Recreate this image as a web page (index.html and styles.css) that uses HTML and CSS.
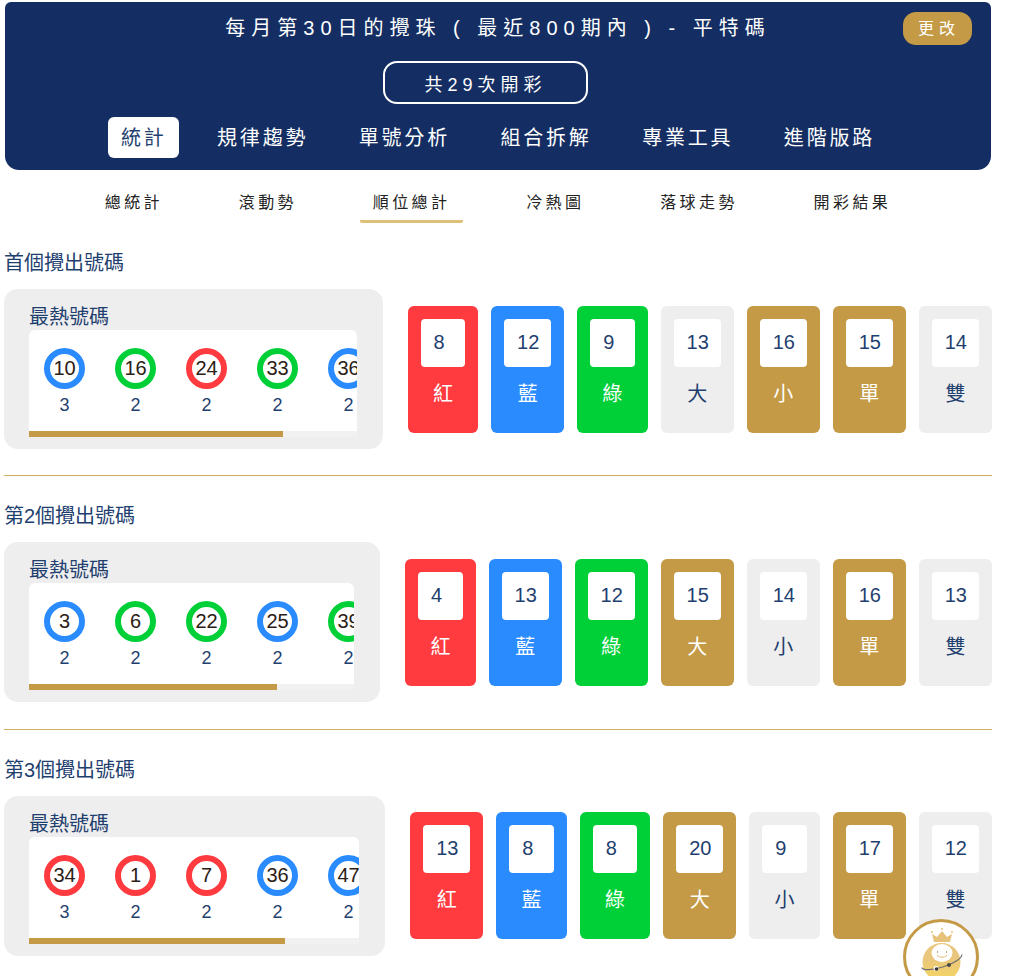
FILE: index.html
```html
<!DOCTYPE html>
<html lang="zh-Hant">
<head>
  <meta charset="UTF-8">
  <title>每月第30日的攪珠 - 平特碼</title>
  <link rel="stylesheet" href="styles.css">
</head>
<body>
  <div class="page">
    <div class="top-panel">
      <div class="title-row">
        <div class="title">每月第30日的攪珠 ( 最近800期內 ) - 平特碼</div>
        <button class="change-btn">更改</button>
      </div>
      <div class="draw-count">共29次開彩</div>
      <div class="main-nav">
        <a class="main-nav-item active">統計</a>
        <a class="main-nav-item">規律趨勢</a>
        <a class="main-nav-item">單號分析</a>
        <a class="main-nav-item">組合拆解</a>
        <a class="main-nav-item">專業工具</a>
        <a class="main-nav-item">進階版路</a>
      </div>
    </div>

    <div class="sub-nav">
      <a class="sub-nav-item">總統計</a>
      <a class="sub-nav-item">滾動勢</a>
      <a class="sub-nav-item active">順位總計</a>
      <a class="sub-nav-item">冷熱圖</a>
      <a class="sub-nav-item">落球走勢</a>
      <a class="sub-nav-item">開彩結果</a>
    </div>

    <div class="section">
      <h3 class="section-title">首個攪出號碼</h3>
      <div class="section-row">
        <div class="hot-box">
          <div class="hot-title">最熱號碼</div>
          <div class="hot-card">
            <div class="ball-list">
              <div class="ball-item"><div class="ball blue">10</div><div class="ball-count">3</div></div>
              <div class="ball-item"><div class="ball green">16</div><div class="ball-count">2</div></div>
              <div class="ball-item"><div class="ball red">24</div><div class="ball-count">2</div></div>
              <div class="ball-item"><div class="ball green">33</div><div class="ball-count">2</div></div>
              <div class="ball-item"><div class="ball blue">36</div><div class="ball-count">2</div></div>
            </div>
            <div class="scroll-track"><div class="scroll-thumb" style="width: 77.4%"></div></div>
          </div>
        </div>
        <div class="tile-list">
          <div class="tile bg-red"><div class="tile-num">8</div><div class="tile-label">紅</div></div>
          <div class="tile bg-blue"><div class="tile-num">12</div><div class="tile-label">藍</div></div>
          <div class="tile bg-green"><div class="tile-num">9</div><div class="tile-label">綠</div></div>
          <div class="tile bg-grey"><div class="tile-num">13</div><div class="tile-label">大</div></div>
          <div class="tile bg-gold"><div class="tile-num">16</div><div class="tile-label">小</div></div>
          <div class="tile bg-gold"><div class="tile-num">15</div><div class="tile-label">單</div></div>
          <div class="tile bg-grey"><div class="tile-num">14</div><div class="tile-label">雙</div></div>
        </div>
      </div>
    </div>

    <div class="section">
      <h3 class="section-title">第2個攪出號碼</h3>
      <div class="section-row">
        <div class="hot-box">
          <div class="hot-title">最熱號碼</div>
          <div class="hot-card">
            <div class="ball-list">
              <div class="ball-item"><div class="ball blue">3</div><div class="ball-count">2</div></div>
              <div class="ball-item"><div class="ball green">6</div><div class="ball-count">2</div></div>
              <div class="ball-item"><div class="ball green">22</div><div class="ball-count">2</div></div>
              <div class="ball-item"><div class="ball blue">25</div><div class="ball-count">2</div></div>
              <div class="ball-item"><div class="ball green">39</div><div class="ball-count">2</div></div>
            </div>
            <div class="scroll-track"><div class="scroll-thumb" style="width: 76.4%"></div></div>
          </div>
        </div>
        <div class="tile-list">
          <div class="tile bg-red"><div class="tile-num">4</div><div class="tile-label">紅</div></div>
          <div class="tile bg-blue"><div class="tile-num">13</div><div class="tile-label">藍</div></div>
          <div class="tile bg-green"><div class="tile-num">12</div><div class="tile-label">綠</div></div>
          <div class="tile bg-gold"><div class="tile-num">15</div><div class="tile-label">大</div></div>
          <div class="tile bg-grey"><div class="tile-num">14</div><div class="tile-label">小</div></div>
          <div class="tile bg-gold"><div class="tile-num">16</div><div class="tile-label">單</div></div>
          <div class="tile bg-grey"><div class="tile-num">13</div><div class="tile-label">雙</div></div>
        </div>
      </div>
    </div>

    <div class="section">
      <h3 class="section-title">第3個攪出號碼</h3>
      <div class="section-row">
        <div class="hot-box">
          <div class="hot-title">最熱號碼</div>
          <div class="hot-card">
            <div class="ball-list">
              <div class="ball-item"><div class="ball red">34</div><div class="ball-count">3</div></div>
              <div class="ball-item"><div class="ball red">1</div><div class="ball-count">2</div></div>
              <div class="ball-item"><div class="ball red">7</div><div class="ball-count">2</div></div>
              <div class="ball-item"><div class="ball blue">36</div><div class="ball-count">2</div></div>
              <div class="ball-item"><div class="ball blue">47</div><div class="ball-count">2</div></div>
            </div>
            <div class="scroll-track"><div class="scroll-thumb" style="width: 77.6%"></div></div>
          </div>
        </div>
        <div class="tile-list">
          <div class="tile bg-red"><div class="tile-num">13</div><div class="tile-label">紅</div></div>
          <div class="tile bg-blue"><div class="tile-num">8</div><div class="tile-label">藍</div></div>
          <div class="tile bg-green"><div class="tile-num">8</div><div class="tile-label">綠</div></div>
          <div class="tile bg-gold"><div class="tile-num">20</div><div class="tile-label">大</div></div>
          <div class="tile bg-grey"><div class="tile-num">9</div><div class="tile-label">小</div></div>
          <div class="tile bg-gold"><div class="tile-num">17</div><div class="tile-label">單</div></div>
          <div class="tile bg-grey"><div class="tile-num">12</div><div class="tile-label">雙</div></div>
        </div>
      </div>
    </div>
  </div>

  <div class="helper">
    <svg width="70" height="70" viewBox="0 0 70 70">
      <defs>
        <linearGradient id="bodyFill" x1="0" y1="0" x2="0" y2="1">
          <stop offset="0.4" stop-color="#e9c67c"/>
          <stop offset="1" stop-color="#f5d662"/>
        </linearGradient>
      </defs>
      <path d="M28 20 L26 12 L31 15 L36 9 L41 15 L46 12 L44 20 Z" fill="#e6c27a"/>
      <circle cx="26" cy="10" r="1" fill="#e6c27a"/>
      <circle cx="36" cy="7" r="1" fill="#e6c27a"/>
      <circle cx="46" cy="10" r="1" fill="#e6c27a"/>
      <circle cx="35.5" cy="40" r="19" fill="url(#bodyFill)"/>
      <ellipse cx="36" cy="31" rx="10.5" ry="9" fill="#fff"/>
      <path d="M31.5 29 V31 M40.5 29 V31" stroke="#b9a77c" stroke-width="1"/>
      <path d="M31 33.5 Q36 37 41 33.5" fill="none" stroke="#e0bf73" stroke-width="1"/>
      <g transform="rotate(-18 36 40)">
        <path d="M15 39 A21 6 0 0 0 57 39" fill="none" stroke="#6f6f6f" stroke-width="1.2"/>
      </g>
      <circle cx="30" cy="46.5" r="2.4" fill="#fff"/>
      <circle cx="30.5" cy="47" r="1.8" fill="#333"/>
      <circle cx="43" cy="43" r="2" fill="#4a4a4a"/>
    </svg>
  </div>
</body>
</html>
```

FILE: styles.css
```css
html, body {
  margin: 0;
  padding: 0;
  background: #fff;
  overflow: hidden;
}
body {
  font-family: "Liberation Sans", "Noto Sans CJK TC", sans-serif;
  color: #1f3f6f;
}
.page {
  width: 988px;
  margin-left: 4px;
}
.top-panel {
  margin: 2px 1px 0;
  padding: 10px 0 12px;
  background: #142e63;
  border-radius: 6px 6px 14px 14px;
  color: #fff;
  display: flex;
  flex-direction: column;
  align-items: center;
}
.title-row {
  width: 100%;
  display: grid;
  grid-template-columns: 1fr auto 1fr;
  align-items: center;
}
.title {
  grid-column: 2;
  font-size: 20px;
  letter-spacing: 6px;
  white-space: pre;
  margin-top: -5px;
}
.change-btn {
  grid-column: 3;
  justify-self: end;
  margin-right: 19px;
  width: 69px;
  height: 33px;
  padding: 0 0 3px 3px;
  border: none;
  border-radius: 13px;
  background: #c49a46;
  color: #fff;
  font-family: inherit;
  font-size: 16px;
  letter-spacing: 5px;
}
.draw-count {
  margin: 16px 25px 0 0;
  width: 205px;
  height: 43px;
  box-sizing: border-box;
  border: 2px solid #fff;
  border-radius: 14px;
  display: flex;
  align-items: center;
  justify-content: center;
  font-size: 18px;
  letter-spacing: 5px;
}
.main-nav {
  margin-top: 13px;
  display: flex;
  gap: 25.5px;
}
.main-nav-item {
  padding: 0 12.5px;
  height: 41px;
  line-height: 43px;
  border-radius: 6px;
  font-size: 20px;
  letter-spacing: 2.8px;
}
.main-nav-item.active {
  background: #fff;
  color: #1f3f6f;
}
.sub-nav {
  margin-top: 21px;
  display: flex;
  justify-content: center;
  gap: 50.8px;
}
.sub-nav-item {
  padding: 1px 12.5px 6px;
  line-height: 22px;
  font-size: 16px;
  letter-spacing: 3.4px;
  color: #222;
  border-bottom: 3px solid transparent;
  border-radius: 2px;
}
.sub-nav-item.active {
  border-bottom-color: #e0c078;
}
.section {
  margin-top: 25px;
  padding-bottom: 26.4px;
  border-bottom: 1px solid #d3af63;
}
.section:last-child {
  border-bottom: none;
}
.section-title {
  margin: 0 0 12px;
  padding-top: 1px;
  font-size: 20px;
  line-height: 28px;
  font-weight: normal;
}
.section-row {
  display: flex;
  align-items: center;
  gap: 25px;
}
.hot-box {
  flex: 1;
  min-width: 0;
  height: 160px;
  box-sizing: border-box;
  padding: 15px 26px 12px 25px;
  background: #eee;
  border-radius: 14px;
  display: flex;
  flex-direction: column;
}
.hot-title {
  font-size: 20px;
  line-height: 26px;
}
.hot-card {
  flex: 1;
  background: #fff;
  border-radius: 6px 6px 0 0;
  overflow: hidden;
  display: flex;
  flex-direction: column;
  justify-content: space-between;
}
.ball-list {
  display: flex;
  padding-top: 18px;
}
.ball-item {
  flex: 0 0 71px;
  display: flex;
  flex-direction: column;
  align-items: center;
}
.ball {
  width: 41px;
  height: 41px;
  box-sizing: border-box;
  border: 6px solid #999;
  border-radius: 50%;
  display: flex;
  align-items: center;
  justify-content: center;
  font-size: 20px;
  color: #2b2015;
  white-space: nowrap;
}
.ball.red { border-color: #ff3b3f; }
.ball.blue { border-color: #2a8bff; }
.ball.green { border-color: #00d038; }
.ball-count {
  margin-top: 5px;
  font-size: 18px;
  line-height: 22px;
}
.scroll-track {
  height: 6px;
  background: #f1f1f1;
}
.scroll-thumb {
  height: 100%;
  background: #c49a46;
}
.tile-list {
  display: flex;
  gap: 12.8px;
}
.tile {
  padding: 13px 13px 0;
  height: 127px;
  box-sizing: border-box;
  border-radius: 6px;
  color: #fff;
}
.tile-num {
  min-width: 44.7px;
  height: 48px;
  line-height: 47px;
  box-sizing: border-box;
  padding: 0 12px 0 13px;
  background: #fff;
  border-radius: 4px;
  font-size: 20px;
  color: #1f3f6f;
}
.tile-label {
  margin-top: 13px;
  text-align: center;
  font-size: 20px;
  line-height: 28px;
}
.bg-red { background: #ff3b3f; }
.bg-blue { background: #2a8bff; }
.bg-green { background: #00d038; }
.bg-gold { background: #c49a46; }
.bg-grey { background: #eee; }
.bg-grey .tile-label { color: #1f3f6f; }
.helper {
  position: fixed;
  left: 903px;
  top: 919px;
  width: 76px;
  height: 76px;
  box-sizing: border-box;
  border: 3px solid #c49a46;
  border-radius: 50%;
  background: #fff;
}
.helper svg {
  display: block;
}
```
